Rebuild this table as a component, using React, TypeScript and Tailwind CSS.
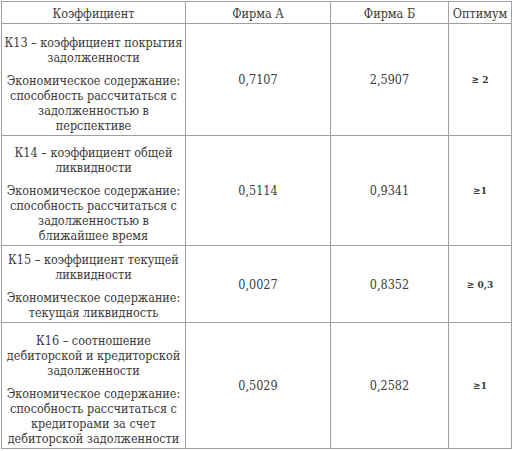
const rows = [
  {
    title: "К13 – коэффициент покрытия задолженности",
    desc: "Экономическое содержание: способность рассчитаться с задолженностью в перспективе",
    a: "0,7107",
    b: "2,5907",
    opt: "≥ 2",
    h: "h-[112px]",
  },
  {
    title: "К14 – коэффициент общей ликвидности",
    desc: "Экономическое содержание: способность рассчитаться с задолженностью в ближайшее время",
    a: "0,5114",
    b: "0,9341",
    opt: "≥1",
    h: "h-[110px]",
  },
  {
    title: "К15 – коэффициент текущей ликвидности",
    desc: "Экономическое содержание: текущая ликвидность",
    a: "0,0027",
    b: "0,8352",
    opt: "≥ 0,3",
    h: "h-[77px]",
  },
  {
    title: "К16 – соотношение дебиторской и кредиторской задолженности",
    desc: "Экономическое содержание: способность рассчитаться с кредиторами за счет дебиторской задолженности",
    a: "0,5029",
    b: "0,2582",
    opt: "≥1",
    h: "h-[126px]",
  },
];

const cell = "border border-[#a0a0a0] text-center";

export default function App() {
  return (
    <div className="pl-px pt-px bg-white">
      <table className="table-fixed border-collapse w-[510px] text-[#3a3a3a] font-['DejaVu_Serif_Condensed','DejaVu_Serif',serif] text-[12.5px] leading-[15px]">
        <colgroup>
          <col className="w-[184px]" />
          <col className="w-[145px]" />
          <col className="w-[118px]" />
          <col className="w-[63px]" />
        </colgroup>
        <thead>
          <tr className="h-[22px]">
            <td className={`${cell} align-bottom pb-[2px]`}>Коэффициент</td>
            <td className={`${cell} align-bottom pb-[2px]`}>Фирма А</td>
            <td className={`${cell} align-bottom pb-[2px]`}>Фирма Б</td>
            <td className={`${cell} align-bottom pb-[2px]`}>Оптимум</td>
          </tr>
        </thead>
        <tbody>
          {rows.map((r) => (
            <tr key={r.title} className={r.h}>
              <td className={`${cell} align-bottom px-0 pb-[2px]`}>
                <p>{r.title}</p>
                <p className="mt-2">{r.desc}</p>
              </td>
              <td className={`${cell} align-middle`}>{r.a}</td>
              <td className={`${cell} align-middle`}>{r.b}</td>
              <td className={`${cell} align-middle font-bold text-[10px]`}>{r.opt}</td>
            </tr>
          ))}
        </tbody>
      </table>
    </div>
  );
}
